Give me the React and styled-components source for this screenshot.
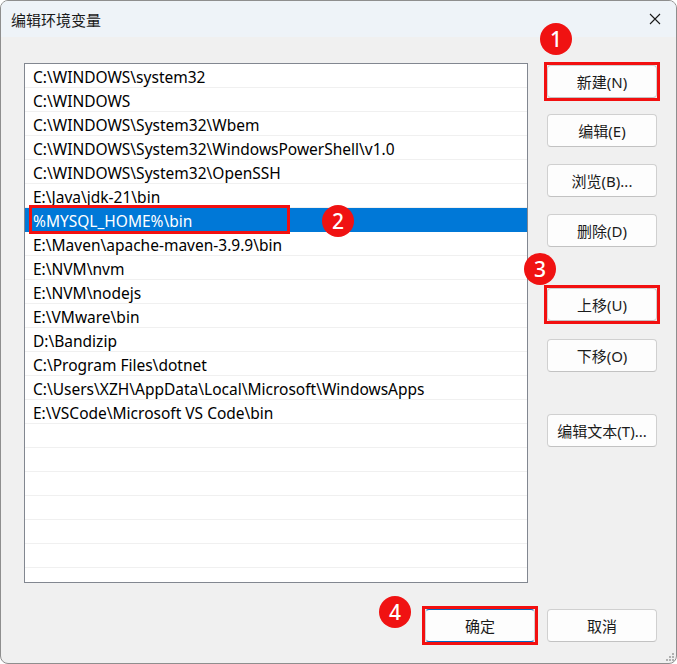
import React from "react";
import styled, { createGlobalStyle, css } from "styled-components";

const Global = createGlobalStyle`
  html, body { margin: 0; padding: 0; background: #ffffff; }
  * { box-sizing: border-box; }
  body { font-family: "Noto Sans", "Noto Sans CJK SC", sans-serif; }
`;

const Window = styled.div`
  position: relative;
  width: 677px;
  height: 664px;
  border: 1px solid #8e8e8e;
  border-radius: 8px;
  background: #f0f0f0;
  display: flex;
  flex-direction: column;
  overflow: hidden;
  color: #000;
`;

const TitleBar = styled.div`
  height: 36px;
  flex: none;
  background: #eef3f8;
  display: flex;
  align-items: center;
  justify-content: space-between;
  padding-left: 10px;
`;

const Title = styled.div`
  font-family: "Noto Sans CJK SC", sans-serif;
  font-size: 15px;
  color: #1a1a1a;
`;

const Close = styled.div`
  width: 42px;
  height: 36px;
  display: flex;
  align-items: center;
  justify-content: center;
`;

const Body = styled.div`
  flex: 1;
  display: grid;
  grid-template-columns: 504px 110px;
  grid-template-rows: 520px auto;
  column-gap: 19px;
  row-gap: 26px;
  padding: 26px 0 0 23px;
`;

const List = styled.div`
  border: 1px solid #828790;
  background: #ffffff;
  overflow: hidden;
  display: flex;
  flex-direction: column;
`;

const Row = styled.div`
  position: relative;
  flex: none;
  height: 24px;
  padding: 3px 0 0 8px;
  display: flex;
  align-items: center;
  font-size: 15.5px;
  white-space: nowrap;
  border-bottom: 1px solid ${(p) => (p.$selected ? "#0078d7" : "#f0f0f0")};
  background: ${(p) => (p.$selected ? "#0078d7" : "transparent")};
  color: ${(p) => (p.$selected ? "#ffffff" : "#000000")};
`;

const RowMark = styled.div`
  position: absolute;
  left: 4px;
  top: -3px;
  width: 261px;
  height: 29px;
  border: 3px solid #f21010;
`;

const Side = styled.div`
  display: flex;
  flex-direction: column;
  padding-top: 2px;
`;

const markCss = css`
  &::after {
    content: "";
    position: absolute;
    left: -4px;
    top: -4px;
    right: -4px;
    bottom: -4px;
    border: 3px solid #f21010;
  }
`;

const Btn = styled.div`
  position: relative;
  width: 110px;
  height: 33px;
  margin-top: ${(p) => p.$mt || 0}px;
  border: 1px solid #d0d0d0;
  border-bottom-color: #c2c2c2;
  ${(p) =>
    p.$default &&
    css`
      border-top-color: #0067c0;
      border-bottom-color: #0067c0;
    `}
  border-radius: 4px;
  background: #fdfdfd;
  display: flex;
  align-items: center;
  justify-content: center;
  font-family: "Noto Sans", "Noto Sans CJK SC", sans-serif;
  font-size: 15px;
  color: #1b1b1b;
  ${(p) => p.$mark && markCss}
`;

const Footer = styled.div`
  grid-column: 1 / span 2;
  display: flex;
  justify-content: flex-end;
  gap: 12px;
`;

const Badge = styled.div`
  position: absolute;
  left: ${(p) => p.$x - 16}px;
  top: ${(p) => p.$y - 16}px;
  width: 32px;
  height: 32px;
  border-radius: 50%;
  background: #f01212;
  color: #ffffff;
  font-family: "Noto Sans", sans-serif;
  font-size: 21px;
  font-weight: 500;
  display: flex;
  align-items: center;
  justify-content: center;
  line-height: 1;
`;

const Grip = styled.svg`
  position: absolute;
  right: 2px;
  bottom: 2px;
`;

const paths = [
  "C:\\WINDOWS\\system32",
  "C:\\WINDOWS",
  "C:\\WINDOWS\\System32\\Wbem",
  "C:\\WINDOWS\\System32\\WindowsPowerShell\\v1.0",
  "C:\\WINDOWS\\System32\\OpenSSH",
  "E:\\Java\\jdk-21\\bin",
  "%MYSQL_HOME%\\bin",
  "E:\\Maven\\apache-maven-3.9.9\\bin",
  "E:\\NVM\\nvm",
  "E:\\NVM\\nodejs",
  "E:\\VMware\\bin",
  "D:\\Bandizip",
  "C:\\Program Files\\dotnet",
  "C:\\Users\\XZH\\AppData\\Local\\Microsoft\\WindowsApps",
  "E:\\VSCode\\Microsoft VS Code\\bin",
];

const rows = [...paths, ...Array(8).fill("")];

const gripDots = [
  [8, 2], [8, 5], [5, 5], [8, 8], [5, 8], [2, 8],
];

export default function App() {
  return (
    <>
      <Global />
      <Window>
        <TitleBar>
          <Title>编辑环境变量</Title>
          <Close>
            <svg width="12" height="12" viewBox="0 0 12 12">
              <path d="M1 1 L11 11 M11 1 L1 11" stroke="#1a1a1a" strokeWidth="1.1" />
            </svg>
          </Close>
        </TitleBar>
        <Body>
          <List>
            {rows.map((t, i) => (
              <Row key={i} $selected={i === 6}>
                {t}
                {i === 6 && <RowMark />}
              </Row>
            ))}
          </List>
          <Side>
            <Btn $mark>新建(N)</Btn>
            <Btn $mt={16}>编辑(E)</Btn>
            <Btn $mt={17}>浏览(B)...</Btn>
            <Btn $mt={17}>删除(D)</Btn>
            <Btn $mt={41} $mark>上移(U)</Btn>
            <Btn $mt={18}>下移(O)</Btn>
            <Btn $mt={42}>编辑文本(T)...</Btn>
          </Side>
          <Footer>
            <Btn $default $mark>确定</Btn>
            <Btn>取消</Btn>
          </Footer>
        </Body>
        <Badge $x={555} $y={38}>1</Badge>
        <Badge $x={337} $y={220}>2</Badge>
        <Badge $x={539} $y={268}>3</Badge>
        <Badge $x={394} $y={611}>4</Badge>
        <Grip width="10" height="10" viewBox="0 0 10 10">
          {gripDots.map(([x, y], i) => (
            <rect key={i} x={x} y={y} width="2" height="2" fill="#b0b0b0" />
          ))}
        </Grip>
      </Window>
    </>
  );
}
